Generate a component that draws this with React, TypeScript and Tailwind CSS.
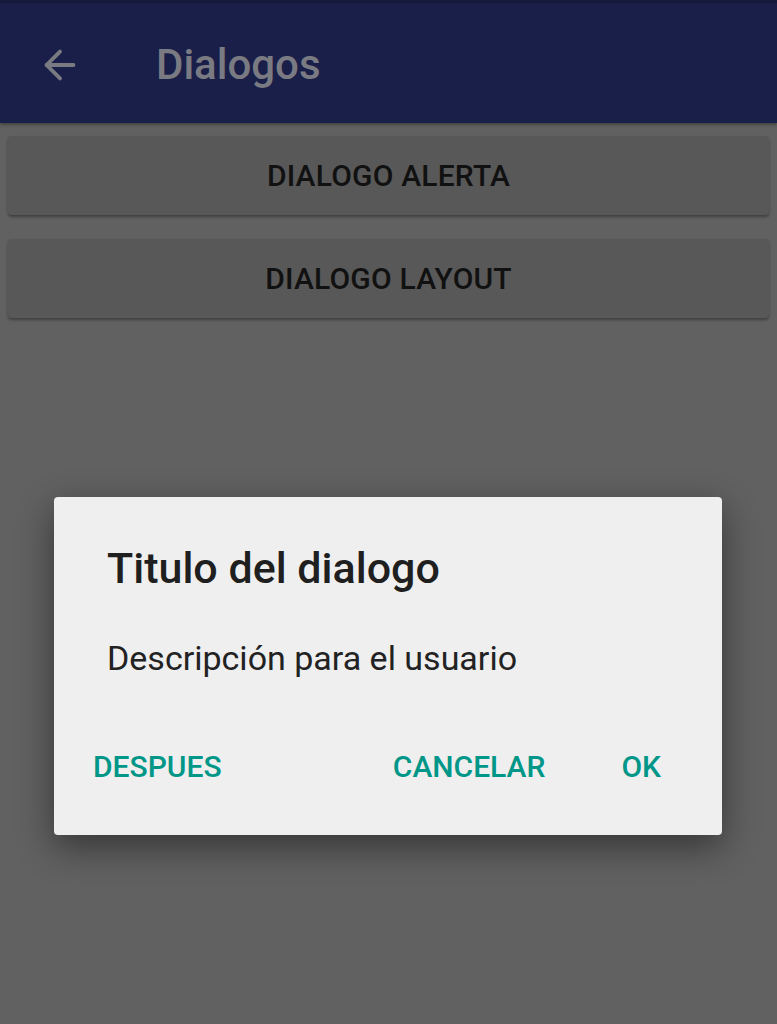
import { ArrowLeft } from 'lucide-react';

const font = { fontFamily: 'Roboto, "Noto Sans", sans-serif' };

const MainButton = ({ label }: { label: string }) => (
    <button className="h-[79px] w-full rounded-[4px] bg-[#585858] text-[30px] font-medium tracking-[0.2px] text-[#111111] shadow-[0_2px_3px_rgba(0,0,0,0.35)]">
        {label}
    </button>
);

export default function App() {
    return (
        <div style={font} className="relative h-[1024px] w-[777px] overflow-hidden bg-[#616161]">
            {/* toolbar */}
            <div className="h-[3px] bg-[#151a3c]" />
            <header className="flex h-[120px] items-center bg-[#1a1f4a] pt-[3px] shadow-[0_2px_3px_rgba(0,0,0,0.3)]">
                <ArrowLeft className="ml-[37px] h-[46px] w-[46px] text-[#7a7b82]" strokeWidth={2} />
                <h1 className="ml-[73px] text-[42px] font-medium text-[#7a7b82]">Dialogos</h1>
            </header>

            <div className="flex flex-col gap-[24px] px-[8px] pt-[13px]">
                <MainButton label="DIALOGO ALERTA" />
                <MainButton label="DIALOGO LAYOUT" />
            </div>

            {/* dialog over the dimmed page */}
            <div className="absolute left-[54px] top-[497px] flex h-[338px] w-[668px] flex-col rounded-[4px] bg-[#efefef] shadow-[0_12px_36px_rgba(0,0,0,0.45)]">
                <h2 className="ml-[53px] mt-[43px] text-[43px] font-medium leading-[56px] text-[#1f1f1f]">Titulo del dialogo</h2>
                <p className="ml-[53px] mt-[42px] text-[34px] leading-[40px] text-[#222]">Descripción para el usuario</p>
                <div className="mt-auto mb-[50px] flex items-center text-[30px] font-medium leading-[36px] text-[#009688]">
                    <span className="ml-[39px]">DESPUES</span>
                    <span className="ml-auto">CANCELAR</span>
                    <span className="ml-[76px] mr-[61px]">OK</span>
                </div>
            </div>
        </div>
    );
}
